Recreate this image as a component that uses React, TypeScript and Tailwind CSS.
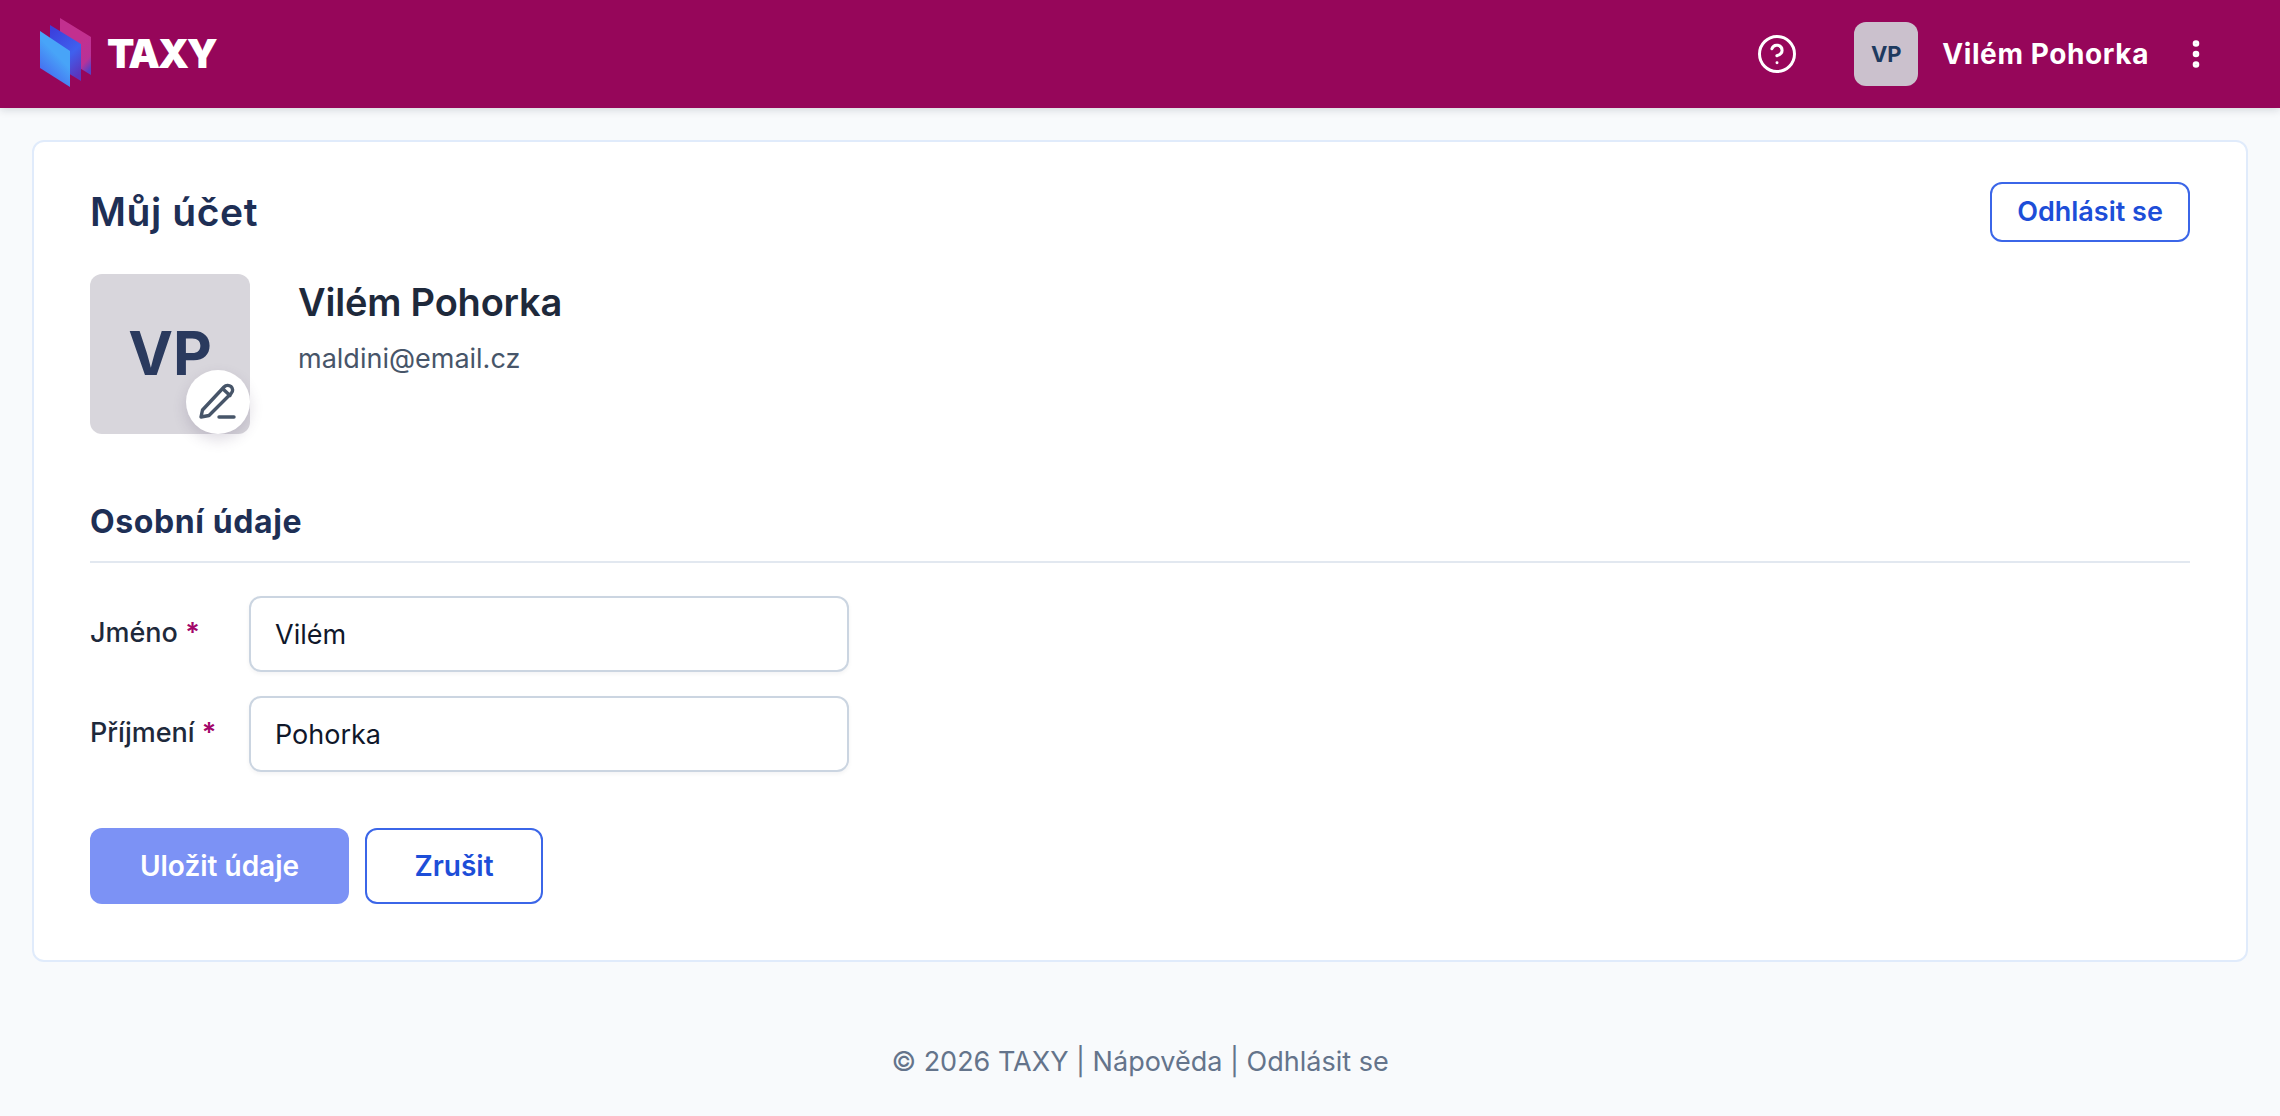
import { CircleHelp, EllipsisVertical } from "lucide-react";

const inputClass =
  "h-[76px] w-[600px] rounded-xl border-2 border-[#cbd5e1] bg-white px-[24px] text-[27px] text-[#0f172a] shadow-[0_2px_4px_rgba(15,23,42,0.05)] outline-none";

function Logo() {
  return (
    <svg className="h-[72px] w-[60px]" viewBox="0 0 60 72" aria-hidden="true">
      <defs>
        <linearGradient id="logo-back" x1="0.3" y1="0.2" x2="0.8" y2="1">
          <stop offset="0.4" stopColor="#c2308f" />
          <stop offset="0.8" stopColor="#b83298" />
          <stop offset="1" stopColor="#5a3fc4" />
        </linearGradient>
        <linearGradient id="logo-middle" x1="0.2" y1="0" x2="0.7" y2="1">
          <stop offset="0" stopColor="#3b3fdc" />
          <stop offset="0.6" stopColor="#3f60ee" />
          <stop offset="1" stopColor="#5b35bd" />
        </linearGradient>
        <linearGradient id="logo-front" x1="0.6" y1="0.45" x2="0.3" y2="1">
          <stop offset="0" stopColor="#48a4f8" />
          <stop offset="1" stopColor="#4561ee" />
        </linearGradient>
      </defs>
      <polygon points="20,0 51,19 51,57 20,38" fill="url(#logo-back)" />
      <polygon points="10,7 41,26 41,63 10,44" fill="url(#logo-middle)" />
      <polygon points="0,13 30,33 30,69 0,50" fill="url(#logo-front)" />
    </svg>
  );
}

function Field({ label, value }: { label: string; value: string }) {
  return (
    <div className="flex items-start">
      <label className="w-[159px] pt-[21px] text-[27px] font-medium leading-[32px] text-[#1e293b]">
        {label} <span className="font-semibold text-[#a3066a]">*</span>
      </label>
      <input className={inputClass} defaultValue={value} />
    </div>
  );
}

export default function App() {
  return (
    <div className="flex min-h-[1116px] flex-col bg-[#f8fafc] font-['Inter',sans-serif]">
      <header className="flex h-[108px] items-center justify-between bg-[#96065a] pl-[40px] pr-[66px] shadow-[0_2px_8px_rgba(15,23,42,0.15)]">
        <div className="flex items-center gap-[7px]">
          <Logo />
          <span className="text-[40px] font-black tracking-[-0.06em] text-white">TAXY</span>
        </div>
        <div className="flex items-center">
          <CircleHelp className="h-[42px] w-[42px] text-white" strokeWidth={1.7} />
          <div className="ml-[56px] flex h-[64px] w-[64px] items-center justify-center rounded-xl bg-[#cbc1cd] text-[22px] font-bold text-[#1e3a5f]">
            VP
          </div>
          <span className="ml-[24px] text-[28px] font-bold tracking-[0.6px] text-white">Vilém Pohorka</span>
          <EllipsisVertical className="ml-[29px] h-[36px] w-[36px] text-white" strokeWidth={2.4} />
        </div>
      </header>

      <main className="px-8 pt-8">
        <div className="h-[822px] rounded-xl border-2 border-[#e0ebfb] bg-white pl-[56px] pr-[56px] pt-[40px]">
          <div className="flex items-start justify-between">
            <h1 className="pt-[7px] text-[39px] font-semibold leading-[46px] tracking-[0.6px] text-[#1e2f55]">Můj účet</h1>
            <button className="h-[60px] w-[200px] rounded-xl border-2 border-[#3b66e8] bg-white text-[27px] font-semibold text-[#1d4ed8]">
              Odhlásit se
            </button>
          </div>

          <div className="mt-[32px] flex">
            <div className="relative flex h-[160px] w-[160px] items-center justify-center rounded-xl bg-[#d8d6dc] pb-[2px] text-[60px] font-bold text-[#2a3a5e]">
              VP
              <div className="absolute bottom-0 right-0 flex h-[64px] w-[64px] items-center justify-center rounded-full bg-white shadow-[0_6px_14px_rgba(80,60,100,0.18)]">
                <svg className="h-[44px] w-[44px]" viewBox="0 0 44 44" fill="none" stroke="#475569" strokeWidth="3.4" strokeLinecap="round" strokeLinejoin="round" aria-hidden="true">
                  <path d="M5 37l1.5-7L28 7c2-2 5-2.2 7-.4 2 1.8 2.2 4.6.3 6.6L13 35.5z" />
                  <path d="M27 9l7 6.5" />
                  <path d="M23 37h15" />
                </svg>
              </div>
            </div>
            <div className="ml-[48px] pt-[3px]">
              <div className="text-[38px] font-semibold leading-[50px] tracking-[-0.2px] text-[#1e293b]">Vilém Pohorka</div>
              <div className="mt-[16px] text-[27px] leading-[32px] text-[#475569]">maldini@email.cz</div>
            </div>
          </div>

          <h2 className="mt-[70px] text-[32px] font-bold leading-[36px] tracking-[0.6px] text-[#1e2f55]">Osobní údaje</h2>
          <div className="mt-[21px] h-[2px] bg-[#e2e8f0]" />

          <div className="mt-[33px] flex flex-col gap-[24px]">
            <Field label="Jméno" value="Vilém" />
            <Field label="Příjmení" value="Pohorka" />
          </div>

          <div className="mt-[56px] flex gap-[16px]">
            <button className="h-[76px] w-[259px] rounded-xl bg-[#7c92f5] text-[28px] font-semibold text-white">
              Uložit údaje
            </button>
            <button className="h-[76px] w-[178px] rounded-xl border-2 border-[#3b66e8] bg-white text-[28px] font-semibold text-[#1d4ed8]">
              Zrušit
            </button>
          </div>
        </div>
      </main>

      <footer className="mt-[84px] text-center text-[27px] leading-[32px] text-[#64748b]">
        © 2026 TAXY | Nápověda | Odhlásit se
      </footer>
    </div>
  );
}
